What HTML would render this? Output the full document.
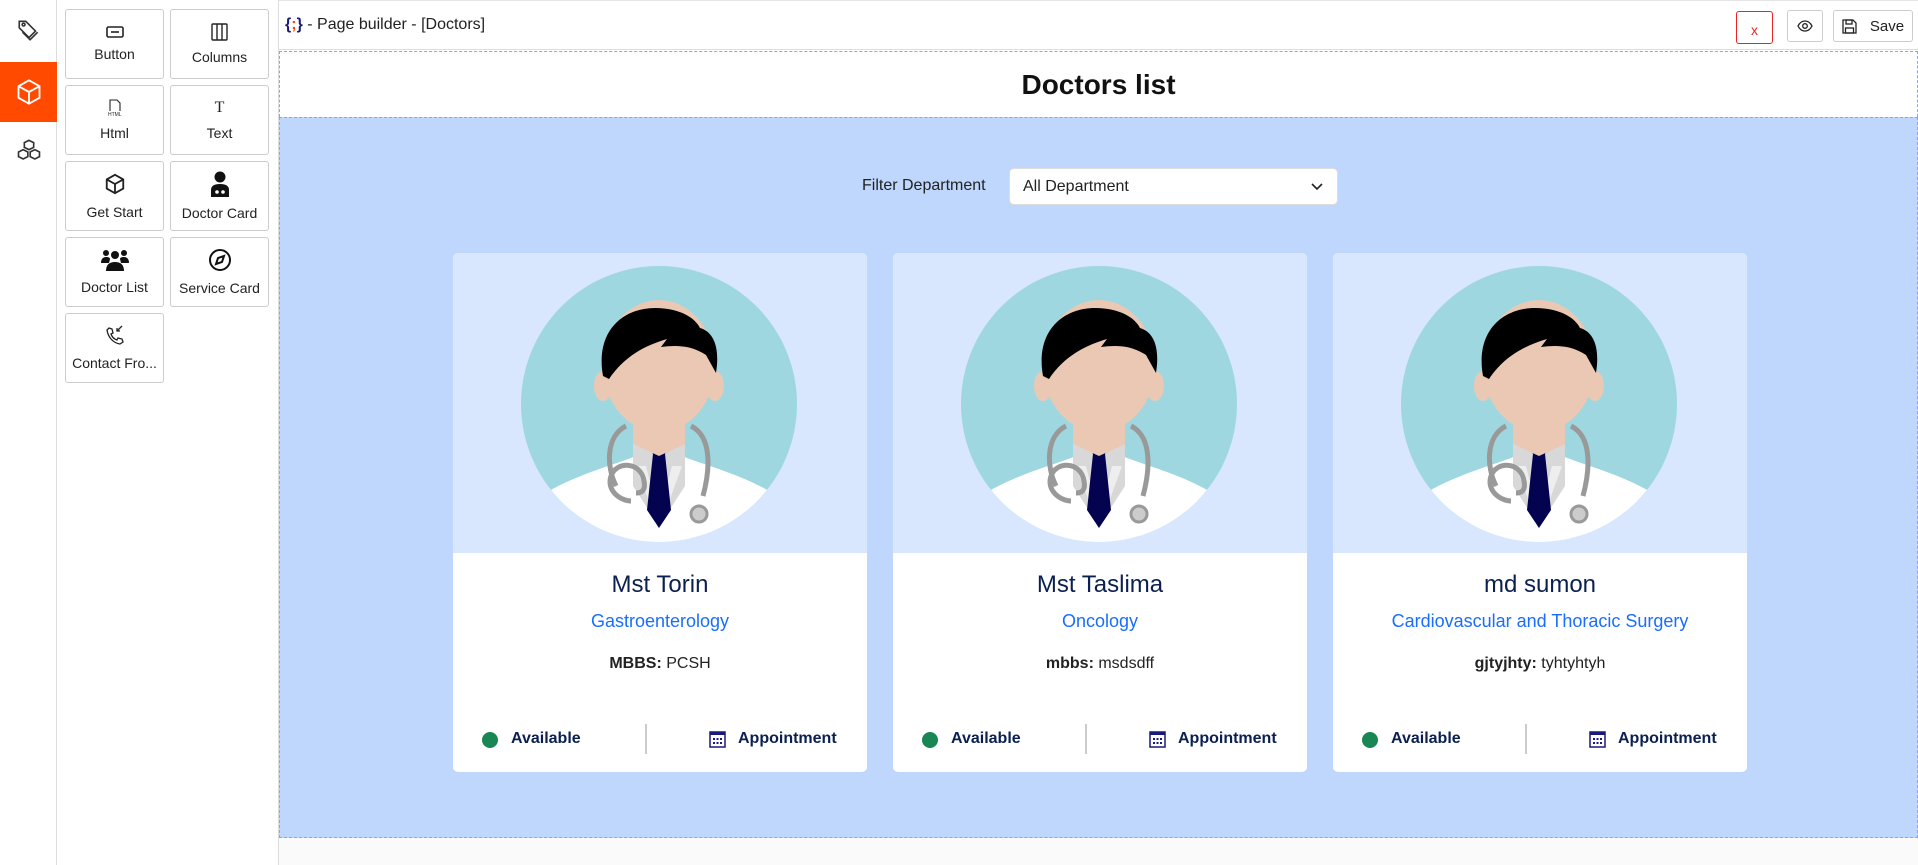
<!DOCTYPE html>
<html><head><meta charset="utf-8"><style>
*{box-sizing:border-box;margin:0;padding:0}
body{width:1918px;height:865px;overflow:hidden;font-family:"Liberation Sans",sans-serif;background:#fff;position:relative;color:#222}
.side{position:absolute;left:0;top:0;width:57px;height:865px;border-right:1px solid #ddd;background:#fff}
.side .ic{position:absolute;left:0;width:57px;height:60px;display:flex;align-items:center;justify-content:center}
.panel{position:absolute;left:57px;top:0;width:222px;height:865px;border-right:1px solid #ddd;background:#fff}
.tile{position:absolute;width:99px;height:70px;border:1px solid #ccc;border-radius:3px;background:#fff;display:flex;flex-direction:column;align-items:center;justify-content:center;font-size:14px;color:#222}
.tile svg{margin-bottom:8px}
.top{position:absolute;left:279px;top:0;right:0;height:50px;border-bottom:1px solid #ddd;border-top:1px solid #e5e5e5}
.title{position:absolute;left:285px;top:16px;font-size:16px;color:#222}
.btn{position:absolute;border:1px solid #ccc;border-radius:3px;background:#fff;display:flex;align-items:center;justify-content:center;font-size:15px}
.hdr{position:absolute;left:279px;top:51px;right:0;height:66px;border:1px dashed #99f;border-bottom:none;text-align:center;font-weight:bold;font-size:28px;line-height:66px;color:#111}
.blue{position:absolute;left:279px;top:117px;right:0;height:721px;background:#bfd7fd;border:1px dashed #99f}
.bottom{position:absolute;left:279px;top:838px;right:0;height:27px;background:#fafafa}
.card{position:absolute;top:253px;width:414px;height:519px;background:#fff;border-radius:5px;overflow:hidden}
.card .img{height:300px;background:#d8e7fe;position:relative}
.card .name{text-align:center;font-size:24px;color:#0b2050;margin-top:18px;font-weight:500}
.card .dept{text-align:center;font-size:18px;color:#1a6efc;margin-top:12px}
.card .deg{text-align:center;font-size:16px;color:#222;margin-top:23px}
.card .foot{position:absolute;left:0;right:0;top:473px;height:30px}
.dot{position:absolute;left:29px;top:6px;width:16px;height:16px;border-radius:50%;background:#198754}
.av{position:absolute;left:58px;top:4px;font-weight:bold;font-size:16px;color:#0b2050}
.div{position:absolute;left:192px;top:-2px;width:2px;height:30px;background:#ccc}
.cal{position:absolute;left:256px;top:5px}
.ap{position:absolute;left:285px;top:4px;font-weight:bold;font-size:16px;color:#0b2050}
</style></head><body>
<div class="side">
 <div class="ic" style="top:0"><svg width="26" height="26" viewBox="0 0 24 24" fill="none" stroke="#333" stroke-width="1.5"><path d="M3 4v6l9 9 6-6-9-9H3z"/><circle cx="7" cy="7" r="1.3"/><path d="M6 14l7 7 7-7"/></svg></div>
 <div class="ic" style="top:62px;background:#ff4a00;height:60px"><svg width="28" height="28" viewBox="0 0 24 24" fill="none" stroke="#fff" stroke-width="1.6"><path d="M12 2l9 5v10l-9 5-9-5V7z"/><path d="M3 7l9 5 9-5M12 12v10"/></svg></div>
 <div class="ic" style="top:122px"><svg width="28" height="28" viewBox="0 0 24 24" fill="none" stroke="#333" stroke-width="1.4"><path d="M12 2l4 2v4l-4 2-4-2V4z"/><path d="M7 10l4 2v4l-4 2-4-2v-4z"/><path d="M17 10l4 2v4l-4 2-4-2v-4z"/></svg></div>
</div>
<div class="panel"></div>
<div class="tile" style="left:65px;top:9px"><svg width="18" height="12" viewBox="0 0 18 12" fill="none" stroke="#222" stroke-width="1.6"><rect x="1" y="1" width="16" height="10" rx="1.5"/><path d="M5 6h8"/></svg>Button</div>
<div class="tile" style="left:170px;top:9px"><svg width="17" height="18" viewBox="0 0 17 18" fill="none" stroke="#222" stroke-width="1.4"><rect x="1" y="1" width="15" height="16" rx="1"/><path d="M6 1v16M11 1v16"/></svg>Columns</div>
<div class="tile" style="left:65px;top:85px"><svg width="14" height="18" viewBox="0 0 14 18" fill="none" stroke="#222" stroke-width="1.1"><path d="M2 12V1h7l3 3v8"/><text x="0" y="17" font-size="5" fill="#222" stroke="none" font-family="Liberation Sans">HTML</text></svg>Html</div>
<div class="tile" style="left:170px;top:85px"><span style="font-family:'Liberation Serif',serif;font-size:16px;margin-bottom:8px">T</span>Text</div>
<div class="tile" style="left:65px;top:161px"><svg width="22" height="24" viewBox="0 0 24 24" fill="none" stroke="#222" stroke-width="2"><path d="M12 2l9 5v10l-9 5-9-5V7z"/><path d="M3 7l9 5 9-5M12 12v10"/></svg>Get Start</div>
<div class="tile" style="left:170px;top:161px"><svg width="18" height="26" viewBox="0 0 18 26"><circle cx="9" cy="6" r="5.5" fill="#111"/><path d="M0 26v-7c0-4 3-6 9-6s9 2 9 6v7z" fill="#111"/><circle cx="6" cy="21" r="1.8" fill="#fff"/><circle cx="12" cy="21" r="1.8" fill="#fff"/></svg>Doctor Card</div>
<div class="tile" style="left:65px;top:237px"><svg width="28" height="22" viewBox="0 0 28 22" fill="#111"><circle cx="5" cy="4" r="3"/><circle cx="23" cy="4" r="3"/><circle cx="14" cy="6" r="4"/><path d="M0 14c0-4 2-6 5-6s4 1 4 2l-1 4z"/><path d="M28 14c0-4-2-6-5-6s-4 1-4 2l1 4z"/><path d="M5 22c0-6 3-9 9-9s9 3 9 9z"/></svg>Doctor List</div>
<div class="tile" style="left:170px;top:237px"><svg width="24" height="24" viewBox="0 0 24 24" fill="none" stroke="#111" stroke-width="2"><circle cx="12" cy="12" r="10"/><path d="M16 8l-2 6-6 2 2-6z"/></svg>Service Card</div>
<div class="tile" style="left:65px;top:313px"><svg width="18" height="22" viewBox="0 0 18 22" fill="none" stroke="#222" stroke-width="1.3"><path d="M3 3l3 1 1 4-2 1c1 3 3 5 6 6l1-2 4 1 1 3-3 2C7 18 2 12 1 5z"/><path d="M16 1l-5 5M11 3v3h3"/></svg>Contact Fro...</div>
<div class="top"></div>
<div class="title"><span style="color:#1a1a7a;font-weight:bold">{<span style="color:#ff4a00">;</span>}</span> - Page builder - [Doctors]</div>
<div class="btn" style="left:1736px;top:11px;width:37px;height:33px;border-color:#e22;color:#e22;font-size:14px;padding-top:4px">x</div>
<div class="btn" style="left:1787px;top:10px;width:36px;height:32px"><svg width="16" height="12" viewBox="0 0 16 12" fill="none" stroke="#222" stroke-width="1.3"><path d="M1 6c2-4 5-5 7-5s5 1 7 5c-2 4-5 5-7 5S3 10 1 6z"/><circle cx="8" cy="6" r="2.3"/></svg></div>
<div class="btn" style="left:1833px;top:10px;width:80px;height:32px;gap:13px"><svg width="15" height="15" viewBox="0 0 15 15" fill="none" stroke="#222" stroke-width="1.3"><path d="M1 1h10l3 3v10H1z"/><rect x="4" y="1" width="6" height="4"/><rect x="3.5" y="9" width="8" height="5"/></svg>Save</div>
<div class="hdr">Doctors list</div>
<div class="blue">
 <div style="position:absolute;left:582px;top:59px;font-size:16px;color:#222">Filter Department</div>
 <div style="position:absolute;left:729px;top:50px;width:329px;height:37px;background:#fff;border:1px solid #ddd;border-radius:5px;font-size:16px;line-height:35px;padding-left:13px;color:#222">All Department<svg style="position:absolute;right:14px;top:14px" width="12" height="8" viewBox="0 0 12 8" fill="none" stroke="#222" stroke-width="1.6"><path d="M1 1l5 5 5-5"/></svg></div>
</div>
<div class="bottom"></div>

<svg width="0" height="0" style="position:absolute"><defs>
<clipPath id="cc"><circle cx="138" cy="138" r="138"/></clipPath>
<g id="doc">
 <circle cx="138" cy="138" r="138" fill="#9ed7df"/>
 <g clip-path="url(#cc)">
  <path d="M20 230c30-20 70-30 95-40h46c25 10 65 20 95 40v60H20z" fill="#fff"/>
  <path d="M112 160h52v60l-26 40-26-40z" fill="#d8d8d8"/>
  <path d="M115 200l23 63 23-63-10 0-13 50-13-50z" fill="#eee"/>
  <path d="M128 180h20l-4 8 6 56-12 18-12-18 6-56z" fill="#03034f"/>
  <path d="M112 145h52v33l-26 12-26-12z" fill="#ebc8b4"/>
  <ellipse cx="138" cy="100" rx="56" ry="66" fill="#ebc8b4"/>
  <ellipse cx="82" cy="120" rx="9" ry="15" fill="#ebc8b4"/>
  <ellipse cx="194" cy="120" rx="9" ry="15" fill="#ebc8b4"/>
  <path d="M82 110c-8-45 20-68 52-68 25 0 40 10 45 20 14 4 20 20 16 45l-10-18c-15-10-30-10-45-8l6-8c-20 6-42 16-58 40z" fill="#000"/>
  <path d="M105 160c-20 10-20 40-10 60M170 160c20 10 20 40 12 70" fill="none" stroke="#999" stroke-width="5"/>
  <path d="M110 235c-10 0-25-10-20-25s30-15 33 5c2 10-3 12-8 12" fill="none" stroke="#999" stroke-width="5"/>
  <circle cx="178" cy="248" r="8" fill="#ccc" stroke="#999" stroke-width="3"/>
 </g>
</g></defs></svg>

<div class="card" style="left:453px"><div class="img"><svg style="position:absolute;left:68px;top:13px" width="276" height="276"><use href="#doc"/></svg></div><div class="name">Mst Torin</div><div class="dept">Gastroenterology</div><div class="deg"><b>MBBS:</b> PCSH</div><div class="foot"><div class="dot"></div><div class="av">Available</div><div class="div"></div><svg class="cal" width="17" height="17" viewBox="0 0 17 17"><rect x="1" y="1" width="15" height="15" fill="none" stroke="#1a1a7a" stroke-width="1.5"/><rect x="1" y="1" width="15" height="3" fill="#1a1a7a"/><g fill="#1a1a7a"><rect x="4" y="7" width="2" height="2"/><rect x="7.5" y="7" width="2" height="2"/><rect x="11" y="7" width="2" height="2"/><rect x="4" y="11" width="2" height="2"/><rect x="7.5" y="11" width="2" height="2"/><rect x="11" y="11" width="2" height="2"/></g></svg><div class="ap">Appointment</div></div></div>
<div class="card" style="left:893px"><div class="img"><svg style="position:absolute;left:68px;top:13px" width="276" height="276"><use href="#doc"/></svg></div><div class="name">Mst Taslima</div><div class="dept">Oncology</div><div class="deg"><b>mbbs:</b> msdsdff</div><div class="foot"><div class="dot"></div><div class="av">Available</div><div class="div"></div><svg class="cal" width="17" height="17" viewBox="0 0 17 17"><rect x="1" y="1" width="15" height="15" fill="none" stroke="#1a1a7a" stroke-width="1.5"/><rect x="1" y="1" width="15" height="3" fill="#1a1a7a"/><g fill="#1a1a7a"><rect x="4" y="7" width="2" height="2"/><rect x="7.5" y="7" width="2" height="2"/><rect x="11" y="7" width="2" height="2"/><rect x="4" y="11" width="2" height="2"/><rect x="7.5" y="11" width="2" height="2"/><rect x="11" y="11" width="2" height="2"/></g></svg><div class="ap">Appointment</div></div></div>
<div class="card" style="left:1333px"><div class="img"><svg style="position:absolute;left:68px;top:13px" width="276" height="276"><use href="#doc"/></svg></div><div class="name">md sumon</div><div class="dept">Cardiovascular and Thoracic Surgery</div><div class="deg"><b>gjtyjhty:</b> tyhtyhtyh</div><div class="foot"><div class="dot"></div><div class="av">Available</div><div class="div"></div><svg class="cal" width="17" height="17" viewBox="0 0 17 17"><rect x="1" y="1" width="15" height="15" fill="none" stroke="#1a1a7a" stroke-width="1.5"/><rect x="1" y="1" width="15" height="3" fill="#1a1a7a"/><g fill="#1a1a7a"><rect x="4" y="7" width="2" height="2"/><rect x="7.5" y="7" width="2" height="2"/><rect x="11" y="7" width="2" height="2"/><rect x="4" y="11" width="2" height="2"/><rect x="7.5" y="11" width="2" height="2"/><rect x="11" y="11" width="2" height="2"/></g></svg><div class="ap">Appointment</div></div></div>
</body></html>
